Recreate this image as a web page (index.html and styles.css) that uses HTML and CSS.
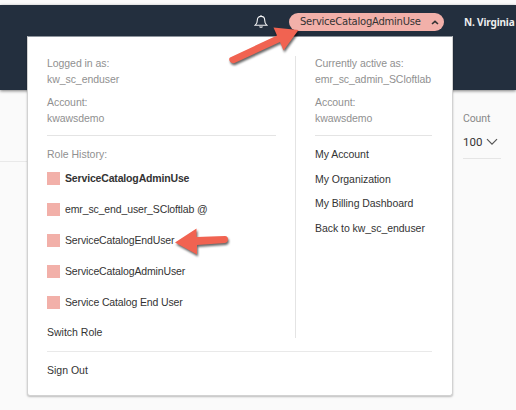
FILE: index.html
```html
<!DOCTYPE html>
<html lang="en">
<head>
<meta charset="utf-8">
<title>Service Catalog</title>
<link rel="stylesheet" href="styles.css">
</head>
<body>
<header class="topbar">
  <svg class="bell" viewBox="0 0 14 15"><path d="M1.200 11.300h11.600c-1.500-1.200-2.100-2.300-2.100-5.100C10.700 3.800 9.300 2.400 7 2.400S3.300 3.800 3.300 6.200c0 2.800-.6 3.900-2.100 5.100zM7 2.400V1"/><path d="M5 12.500c.3 1.800 3.700 1.800 4 0z" class="clapper"/></svg>
  <div class="pill"><span>ServiceCatalogAdminUse</span><svg class="caret" viewBox="0 0 8 5"><path d="M1 4l3-2.700L7 4"/></svg></div>
  <div class="region">N. Virginia</div>
</header>
<main class="page">
  <div class="edge"></div>
  <div class="filter">
    <div class="filter-label">Count</div>
    <div class="filter-value"><span>100</span><svg viewBox="0 0 12 8"><path d="M1 1.200l5 5 5-5"/></svg></div>
  </div>
</main>
<section class="menu">
  <div class="columns">
    <div class="left">
      <div class="identity">
        <p>Logged in as:</p><p>kw_sc_enduser</p>
        <p class="gap">Account:</p><p>kwawsdemo</p>
      </div>
      <p class="history">Role History:</p>
      <ul class="roles">
        <li class="current"><i></i><span>ServiceCatalogAdminUse</span></li>
        <li><i></i><span>emr_sc_end_user_SCloftlab @</span></li>
        <li><i></i><span>ServiceCatalogEndUser</span></li>
        <li><i></i><span>ServiceCatalogAdminUser</span></li>
        <li><i></i><span>Service Catalog End User</span></li>
      </ul>
      <p class="switch">Switch Role</p>
    </div>
    <div class="right">
      <div class="identity">
        <p>Currently active as:</p><p>emr_sc_admin_SCloftlab</p>
        <p class="gap">Account:</p><p>kwawsdemo</p>
      </div>
      <ul class="links">
        <li>My Account</li>
        <li>My Organization</li>
        <li>My Billing Dashboard</li>
        <li>Back to kw_sc_enduser</li>
      </ul>
    </div>
  </div>
  <div class="signout">Sign Out</div>
</section>
<svg class="arrows" viewBox="0 0 516 410">
  <path d="M230 57.500L277 35.500L273.500 27.500L298.500 30L283.500 50.500L280 42L234.500 63C231 64.500 227.500 59.500 230 57.500Z"/>
  <path d="M175 242.500L196.500 228.500V237L225 236C229 236 229 242.500 225 243L197 245V254.500Z"/>
</svg>
</body>
</html>
```
FILE: styles.css
```css
* { box-sizing: border-box; }
body {
  margin: 0;
  width: 516px;
  height: 410px;
  overflow: hidden;
  position: relative;
  background: #fafafa;
  font: 10.5px/16px "Liberation Sans", Arial, sans-serif;
  color: #333;
}
p, ul { margin: 0; padding: 0; list-style: none; }
svg { fill: none; }

.topbar {
  display: flex;
  align-items: flex-start;
  margin-top: 5px;
  height: 85px;
  padding-left: 254px;
  background: #232f3e;
  box-shadow: 0 1px 3px rgba(0, 0, 0, .5);
  white-space: nowrap;
}
.bell { width: 14px; height: 15px; margin-top: 9px; stroke: #f3f4f5; stroke-width: 1.1; }
.bell .clapper { fill: #f3f4f5; stroke: none; }
.pill {
  display: flex;
  align-items: center;
  width: 155px;
  height: 18px;
  margin: 8px 0 0 21px;
  padding: 0 5px 0 11px;
  justify-content: space-between;
  border-radius: 9px;
  background: #f2b0a9;
  font: 10px/18px "DejaVu Sans", Verdana, sans-serif;
  letter-spacing: -.24px;
}
.caret { width: 8px; height: 5px; margin-top: 1px; stroke: #333; stroke-width: 1.6; }
.region { margin: 9px 0 0 20px; color: #eee; font: bold 10px/16px "Noto Sans", sans-serif; letter-spacing: -.15px; }

.page { display: flex; justify-content: space-between; }
.edge { width: 27px; height: 72px; border-bottom: 1px solid #e9e9e9; }
.filter { width: 53px; padding-top: 21px; font-family: Roboto, sans-serif; }
.filter-label { color: #888; font-size: 10.500px; letter-spacing: -.1px; }
.filter-value {
  display: flex;
  align-items: center;
  gap: 4px;
  width: 38px;
  height: 32px;
  padding-bottom: 2px;
  border-bottom: 1px solid #e5e5e5;
  font-size: 11.500px;
}
.filter-value svg { width: 12px; height: 8px; stroke: #555; stroke-width: 1.2; }

.menu {
  position: absolute;
  left: 27px;
  top: 36px;
  width: 426px;
  height: 360px;
  padding: 18px 20px 0 19px;
  background: #fff;
  border: 1px solid #d2d2d2;
  border-top-color: #8e959d;
  border-radius: 0 0 3px 3px;
  box-shadow: 0 1px 2px rgba(0, 0, 0, .25);
  white-space: nowrap;
}
.columns { display: flex; height: 284px; }
.left { width: 248px; }
.left .identity { width: 229px; }
.right { position: relative; flex: 1; padding-left: 20px; }
.right::before { content: ""; position: absolute; left: 0; top: 1px; width: 1px; height: 282px; background: #e4e4e4; }
.identity { height: 81px; border-bottom: 1px solid #e4e4e4; color: #909090; letter-spacing: -.06px; }
.gap { margin-top: 7px; }
.history { margin-top: 10px; color: #909090; }
.roles { margin-top: 8px; letter-spacing: -.13px; }
.roles li { display: flex; align-items: center; gap: 5px; height: 16px; margin-bottom: 15px; }
.roles i { width: 13px; height: 13px; background: #f2b0a9; }
.roles .current { font-weight: bold; letter-spacing: -.16px; }
.switch { margin-top: -1px; }
.links { padding-top: 10px; letter-spacing: -.05px; }
.links li { height: 16px; margin-bottom: 8.700px; }
.signout { margin-top: 12px; padding-top: 10px; border-top: 1px solid #e9e9e9; }

.arrows {
  position: absolute;
  inset: 0;
  width: 516px;
  height: 410px;
  pointer-events: none;
  fill: #f16351;
  filter: drop-shadow(1.500px 2px 1px rgba(0, 0, 0, .6));
}
```
